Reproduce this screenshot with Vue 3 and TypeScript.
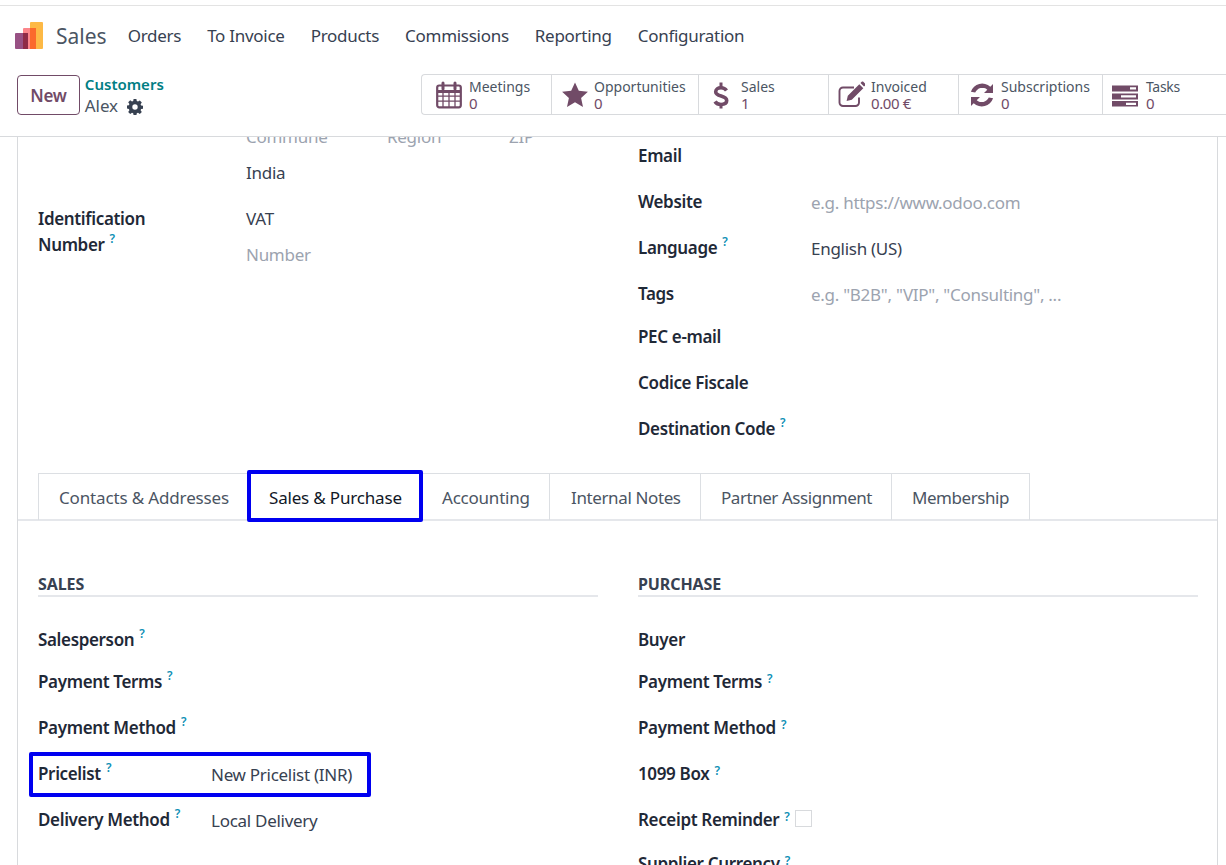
<script setup lang="ts">
const menu = ['Orders', 'To Invoice', 'Products', 'Commissions', 'Reporting', 'Configuration']
const stats = [
  { key: 'cal', label: 'Meetings', value: '0', cls: 's1' },
  { key: 'star', label: 'Opportunities', value: '0', cls: 's2' },
  { key: 'dollar', label: 'Sales', value: '1', cls: 's3' },
  { key: 'edit', label: 'Invoiced', value: '0.00 €', cls: 's4' },
  { key: 'sync', label: 'Subscriptions', value: '0', cls: 's5' },
  { key: 'tasks', label: 'Tasks', value: '0', cls: 's6' },
]
const tabs = [
  { label: 'Contacts & Addresses', cls: 't1' },
  { label: 'Sales & Purchase', cls: 't2' },
  { label: 'Accounting', cls: 't3' },
  { label: 'Internal Notes', cls: 't4' },
  { label: 'Partner Assignment', cls: 't5' },
  { label: 'Membership', cls: 't6' },
]
const topRight = [
  { label: 'Email', value: '', help: false, cls: 'r46' },
  { label: 'Website', value: 'e.g. https://www.odoo.com', help: false, ph: true, cls: 'r46' },
  { label: 'Language', value: 'English (US)', help: true, cls: 'r46' },
  { label: 'Tags', value: 'e.g. "B2B", "VIP", "Consulting", ...', help: false, ph: true, cls: 'r43' },
  { label: 'PEC e-mail', value: '', help: false, cls: 'r46' },
  { label: 'Codice Fiscale', value: '', help: false, cls: 'r46' },
  { label: 'Destination Code', value: '', help: true, cls: 'r46' },
]
const sales = [
  { label: 'Salesperson', value: '', help: true, cls: 'r42' },
  { label: 'Payment Terms', value: '', help: true, cls: 'r46' },
  { label: 'Payment Method', value: '', help: true, cls: 'r46' },
  { label: 'Pricelist', value: 'New Pricelist (INR)', help: true, cls: 'r46', mark: true },
  { label: 'Delivery Method', value: 'Local Delivery', help: true, cls: 'r46' },
]
const purchase = [
  { label: 'Buyer', help: false, cls: 'r42' },
  { label: 'Payment Terms', help: true, cls: 'r46' },
  { label: 'Payment Method', help: true, cls: 'r46' },
  { label: '1099 Box', help: true, cls: 'r46' },
  { label: 'Receipt Reminder', help: true, cls: 'r44', box: true },
  { label: 'Supplier Currency', help: true, cls: 'r46' },
]
</script>

<template>
  <div class="page">
    <header class="head">
      <nav class="nav">
        <svg class="logo" width="30" height="28" viewBox="0 0 30 28">
          <rect x="0" y="11" width="13" height="16" rx="1" fill="#985184" />
          <rect x="8" y="6" width="13" height="21" rx="1" fill="#fc868b" />
          <rect x="15" y="0" width="13" height="27" rx="1" fill="#fdb945" />
          <rect x="15" y="6" width="6" height="21" fill="#fb6a2c" />
          <rect x="8" y="11" width="5" height="16" fill="#8f2b47" />
        </svg>
        <span class="brand">Sales</span>
        <a v-for="m in menu" :key="m" class="menu">{{ m }}</a>
      </nav>
      <div class="ctrl">
        <button class="new">New</button>
        <div class="crumb">
          <a class="parent">Customers</a>
          <div class="cur">
            <span>Alex</span>
            <svg class="gear" width="16" height="16" viewBox="0 0 16 16">
              <path fill="#374151" fill-rule="evenodd" d="M6.600 0h2.800l.4 2.100 1.200.5 1.800-1.200 2 2-1.200 1.800.5 1.200 2.100.4v2.800l-2.100.4-.5 1.200 1.200 1.800-2 2-1.800-1.200-1.200.5-.4 2.100H6.600l-.4-2.100-1.200-.5-1.800 1.200-2-2 1.200-1.800-.5-1.200L-.2 9.400V6.600l2.100-.4.5-1.200L1.200 3.200l2-2L5 2.400l1.200-.5zM8 5.300a2.700 2.700 0 1 0 0 5.400 2.700 2.700 0 0 0 0-5.400z" />
            </svg>
          </div>
        </div>
        <div class="stats">
          <div v-for="s in stats" :key="s.key" class="stat" :class="s.cls">
            <svg class="ico" width="28" height="28" viewBox="0 0 28 28">
              <g v-if="s.key === 'cal'" fill="none" stroke="#714b67">
                <rect x="2.200" y="4.500" width="23.600" height="21.800" rx="2" stroke-width="2.200" />
                <path d="M2 10.500h24" stroke-width="3" />
                <path d="M2.500 15.200h23M2.500 20.200h23M8 11v15M14 11v15M20 11v15" stroke-width="1.300" />
                <path d="M8 2v6M20 2v6" stroke-width="3" stroke-linecap="round" />
              </g>
              <path v-else-if="s.key === 'star'" fill="#714b67" d="M14 1.500l3.800 8.300 9.100 1-6.800 6.100 1.900 9L14 21.300l-8 4.600 1.900-9-6.800-6.100 9.100-1z" />
              <g v-else-if="s.key === 'dollar'" fill="none" stroke="#714b67">
                <path d="M19.500 9.500c-1.200-1.800-3-2.700-5.500-2.700-3.200 0-5.300 1.500-5.300 3.900 0 5.600 11 3.100 11 8.900 0 2.500-2.300 3.900-5.700 3.900-2.700 0-4.800-1.100-6-3" stroke-width="3.600" />
                <path d="M14 1.500v5M14 23v4.500" stroke-width="3" />
              </g>
              <g v-else-if="s.key === 'edit'">
                <path fill="none" stroke="#714b67" stroke-width="1.900" d="M22 16.500v5a3.500 3.500 0 0 1-3.500 3.500H6a3.500 3.500 0 0 1-3.500-3.500V10A3.500 3.500 0 0 1 6 6.500h11" />
                <path fill="#714b67" d="M22.300 3.200l4 4-11.500 11.500-5.200 1.200 1.200-5.200zM23.500 2l1.200-1.200c.5-.5 1.200-.5 1.600 0l2 2c.5.5.5 1.100 0 1.600L27 5.600z" />
              </g>
              <g v-else-if="s.key === 'sync'" fill="#714b67">
                <path d="M25 3v9h-9l3.300-3.300A7.800 7.800 0 0 0 7.200 11.500l-4.300-.8A12 12 0 0 1 22.300 5.700z" />
                <path d="M3 25v-9h9l-3.300 3.300a7.800 7.800 0 0 0 12.100-2.800l4.300.8A12 12 0 0 1 5.700 22.300z" />
              </g>
              <g v-else>
                <path fill="#714b67" fill-rule="evenodd" d="M1 4.500h26v6H1zm18 1.800v2.200h6V6.300zM1 12.500h26v6H1zm9 1.800v2.200h15v-2.200zM1 20h26v5.500H1zm14 1.700v2.200h10v-2.200z" />
              </g>
            </svg>
            <div class="stat-text">
              <span>{{ s.label }}</span>
              <span class="num">{{ s.value }}</span>
            </div>
          </div>
        </div>
      </div>
    </header>

    <main class="scroll">
      <div class="sheet">
        <div class="upper">
          <div class="col">
            <div class="addr">
              <span class="ph w141">Commune</span>
              <span class="ph w122">Region</span>
              <span class="ph">ZIP</span>
            </div>
            <div class="india">India</div>
            <div class="ident">
              <div class="lbl lbl-wide">Identification<br />Number<sup class="q">?</sup></div>
              <div class="vat">
                <div class="vat-l">VAT</div>
                <div class="ph">Number</div>
              </div>
            </div>
          </div>
          <div class="col col-r">
            <div v-for="r in topRight" :key="r.label" class="row" :class="r.cls">
              <div class="lbl">{{ r.label }}<sup v-if="r.help" class="q">?</sup></div>
              <div class="val" :class="{ ph: r.ph }">{{ r.value }}</div>
            </div>
          </div>
        </div>

        <div class="tabs">
          <div v-for="t in tabs" :key="t.label" class="tab" :class="[t.cls, { on: t.cls === 't2' }]">
            {{ t.label }}
            <span v-if="t.cls === 't2'" class="mark tab-mark"></span>
          </div>
        </div>

        <div class="lower">
          <section class="col">
            <h3>SALES</h3>
            <div v-for="r in sales" :key="r.label" class="row low" :class="r.cls">
              <div class="lbl lbl-s">{{ r.label }}<sup v-if="r.help" class="q">?</sup></div>
              <div class="val">{{ r.value }}</div>
              <span v-if="r.mark" class="mark row-mark"></span>
            </div>
          </section>
          <section class="col">
            <h3>PURCHASE</h3>
            <div v-for="r in purchase" :key="r.label" class="row low" :class="r.cls">
              <div class="lbl lbl-auto">{{ r.label }}<sup v-if="r.help" class="q">?</sup><span v-if="r.box" class="box"></span></div>
            </div>
          </section>
        </div>
      </div>
    </main>
  </div>
</template>

<style>
html, body { margin: 0; padding: 0; background: #fff; }
</style>

<style scoped>
.page {
  height: 865px;
  width: 1226px;
  overflow: hidden;
  display: flex;
  flex-direction: column;
  font-family: "Noto Sans", "Open Sans", sans-serif;
  font-size: 17px;
  letter-spacing: -0.28px;
  color: #374151;
  background: #fff;
}
.head {
  flex: none;
  margin-top: 5px;
  border-top: 1px solid #e3e3e3;
  border-bottom: 1px solid #d8dadd;
  height: 130px;
  background: #fff;
}
.nav { display: flex; align-items: center; height: 59px; padding-left: 15px; }
.logo { margin-right: 11px; margin-top: 1px; }
.brand { font-size: 21px; margin-right: 21px; color: #4b5563; letter-spacing: 0; }
.menu { margin-right: 26px; color: #374151; font-size: 17px; }
.ctrl { display: flex; align-items: flex-start; padding-left: 17px; margin-top: 10px; }
.new {
  width: 63px; height: 40px; box-sizing: border-box;
  border: 1px solid #714b67; border-radius: 4px; background: #fff;
  color: #714b67; font: 600 17px "Noto Sans", sans-serif; letter-spacing: -0.3px; padding: 0;
}
.crumb { margin-left: 5px; width: 336px; }
.parent { display: block; color: #017e84; font-weight: 600; font-size: 15px; line-height: 20px; margin-top: -1px; letter-spacing: 0; }
.cur { display: flex; align-items: center; gap: 9px; font-size: 17px; line-height: 22px; color: #4b5563; margin-top: 1px; letter-spacing: -0.1px; }
.gear { margin-top: 2px; }
.stats {
  display: flex; height: 41px; box-sizing: border-box; flex: none;
  border: 1px solid #d8dadd; border-right: none; border-radius: 4px 0 0 4px; margin-top: -1px; margin-left: 1px;
}
.stat {
  display: flex; align-items: center; box-sizing: border-box; letter-spacing: 0;
  border-left: 1px solid #d8dadd; color: #4b5563; height: 39px;
}
.stat:first-child { border-left: none; }
.s1 { width: 129px; padding-left: 13px; gap: 6px; }
.s2 { width: 147px; padding-left: 9px; gap: 5px; }
.s3 { width: 130px; padding-left: 8px; gap: 6px; }
.s4 { width: 130px; padding-left: 8px; gap: 6px; }
.s5 { width: 144px; padding-left: 9px; gap: 5px; }
.s6 { width: 124px; padding-left: 8px; gap: 7px; }
.s6 .stat-text { letter-spacing: -0.3px; }
.ico { flex: none; }
.stat-text { display: flex; flex-direction: column; font-size: 14px; line-height: 17px; white-space: nowrap; }
.num { color: #714b67; font-size: 15px; letter-spacing: -0.4px; }
.scroll { flex: 1; overflow: hidden; min-height: 0; }
.sheet {
  margin: -18px 8px 0 17px;
  border-left: 1px solid #d8dadd;
  border-right: 1px solid #d8dadd;
  height: 900px;
}
.upper { display: grid; grid-template-columns: 560px 560px; column-gap: 40px; padding: 0 20px; height: 354px; }
.addr { display: flex; padding-left: 208px; height: 36px; line-height: 36px; }
.w141 { width: 141px; }
.w122 { width: 122px; }
.ph { color: #9ca3af; }
.india { padding-left: 208px; height: 46px; line-height: 26px; margin-top: 5px; }
.ident { display: flex; }
.lbl { font-weight: 600; color: #1f2937; width: 173px; flex: none; line-height: 26px; letter-spacing: -0.35px; }
.lbl-wide { width: 208px; }
.vat-l { height: 36px; line-height: 26px; }
.vat div { line-height: 26px; }
.col-r { padding-top: 24px; }
.row { display: flex; position: relative; box-sizing: border-box; line-height: 26px; }
.r46 { height: 46px; }
.r44 { height: 44px; }
.r43 { height: 43px; }
.r42 { height: 42px; }
.val { line-height: 28px; }
.q { font-size: 12px; font-weight: 600; color: #0d8fb5; margin-left: 5px; line-height: 0; vertical-align: 8px; }
.tabs { display: flex; height: 48px; box-sizing: border-box; padding-left: 20px; border-bottom: 2px solid #e5e7eb; }
.tab {
  position: relative; box-sizing: border-box; height: 47px; padding: 0 0 0 20px; line-height: 48px;
  border: 1px solid #dcdfe3; border-bottom: none;
  white-space: nowrap; font-size: 17px; color: #4b5563;
}
.tab + .tab { border-left: none; }
.t1 { width: 210px; letter-spacing: -0.15px; }
.t2 { width: 175px; padding-left: 21px; letter-spacing: -0.18px; }
.t3 { width: 127px; padding-left: 19px; letter-spacing: -0.22px; }
.t4 { width: 151px; padding-left: 21px; letter-spacing: -0.38px; }
.t5 { width: 191px; letter-spacing: -0.45px; }
.t6 { width: 138px; letter-spacing: -0.45px; }
.tab.on { color: #111827; background: #fff; }
.mark { position: absolute; border: 4px solid #0000f0; border-radius: 2px; pointer-events: none; box-sizing: border-box; }
.tab-mark { left: -1px; width: 176px; top: -4px; height: 52px; }
.lower { display: grid; grid-template-columns: 560px 560px; column-gap: 40px; padding: 52px 20px 0; }
h3 {
  margin: 0 0 30px; font-size: 16px; font-weight: 700; color: #374151; line-height: 22px;
  height: 24px; box-sizing: border-box; border-bottom: 2px solid #e5e7eb; letter-spacing: -0.1px;
}
.lbl-s { width: 173px; }
.lbl-auto { width: auto; display: flex; align-items: flex-start; }
.row-mark { left: -9px; width: 342px; top: -9px; height: 45px; }
.box { display: inline-block; width: 17px; height: 17px; box-sizing: border-box; border: 1px solid #d8dadd; margin: 3px 0 0 5px; }
.lbl-auto .q { line-height: 20px; vertical-align: top; }
</style>
